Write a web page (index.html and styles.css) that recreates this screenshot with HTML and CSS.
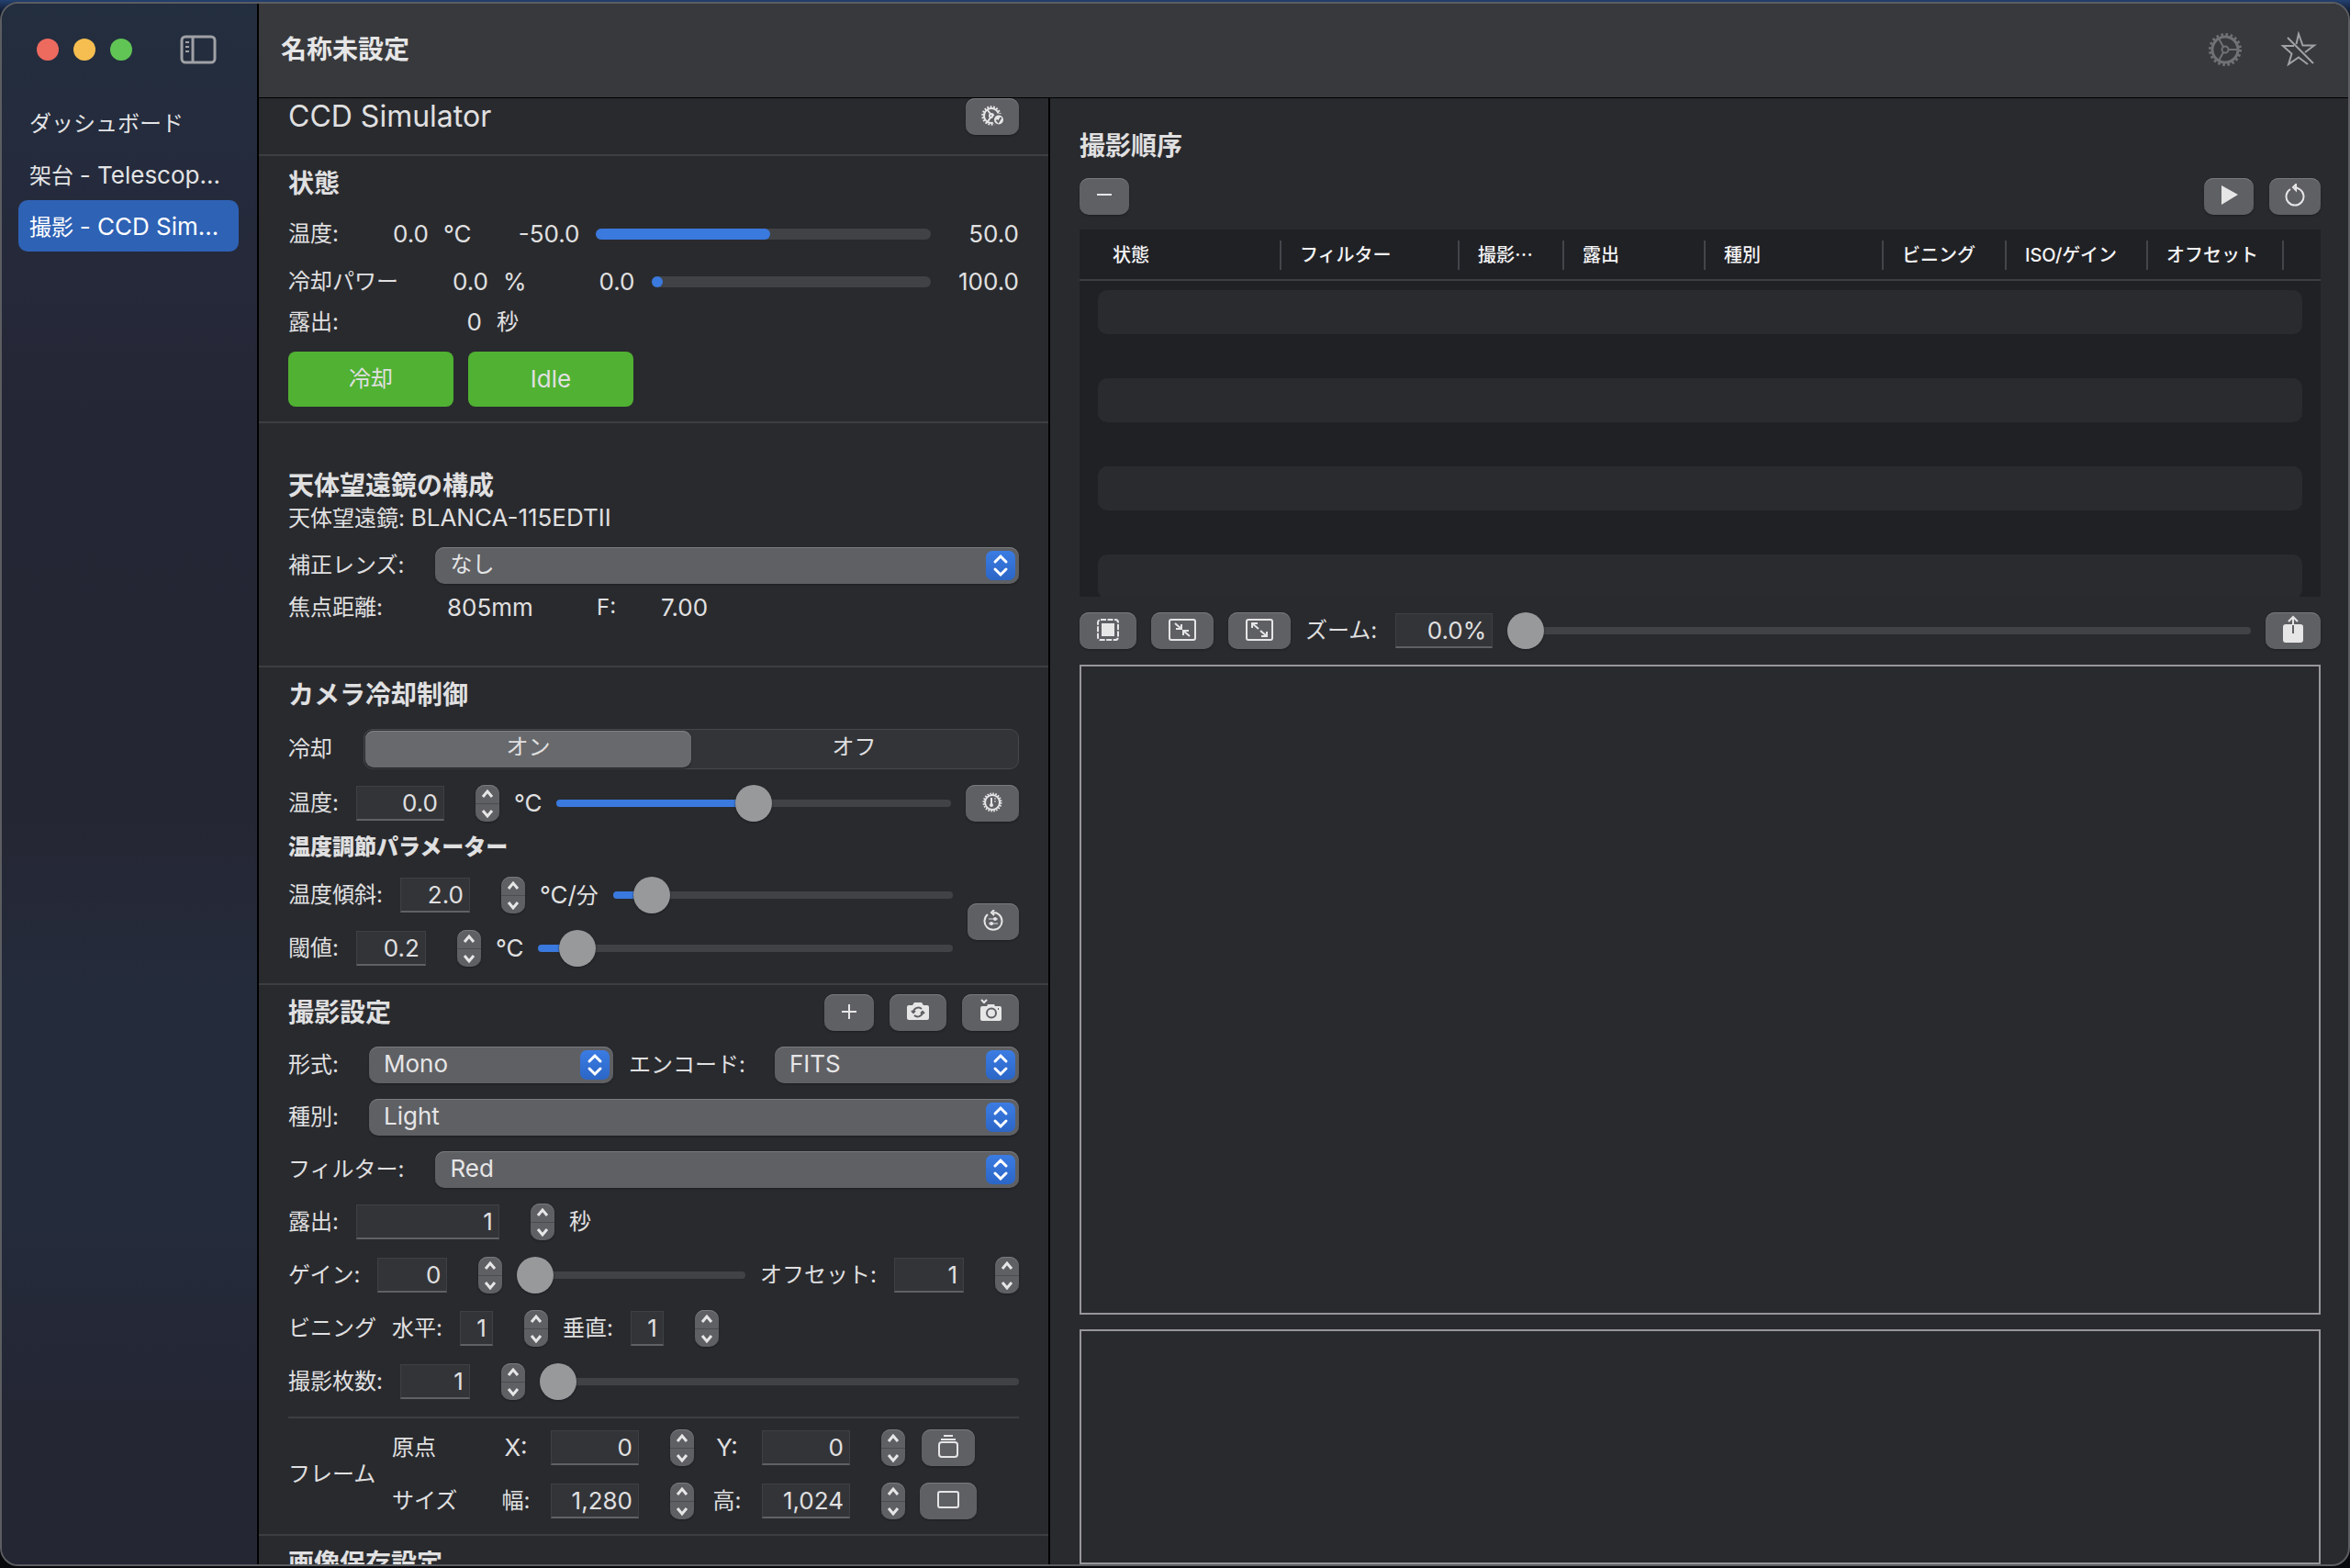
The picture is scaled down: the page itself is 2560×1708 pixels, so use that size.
FILE: index.html
```html
<!DOCTYPE html>
<html lang="ja">
<head>
    <meta charset="UTF-8">
    <meta name="viewport" content="width=device-width, initial-scale=1.0">
    <title>名称未設定</title>
    <link rel="stylesheet" href="styles.css">
</head>
<body>
    <!-- shared icons -->
    <svg class="sprite" aria-hidden="true">
        <symbol id="i-up" viewBox="0 0 26 20"><path d="M8 13l5-6 5 6"/></symbol>
        <symbol id="i-down" viewBox="0 0 26 20"><path d="M8 7l5 6 5-6"/></symbol>
        <symbol id="i-updown" viewBox="0 0 32 32"><rect width="32" height="32" rx="7" fill="url(#blue)" stroke="none"/><path d="M10 12l6-6 6 6M10 20l6 6 6-6"/></symbol>
        <linearGradient id="blue" x1="0" y1="0" x2="0" y2="1"><stop offset="0" stop-color="#3b7ce3"/><stop offset="1" stop-color="#2b66c6"/></linearGradient>
    </svg>

    <div class="window">
        <aside class="sidebar">
            <div class="window-buttons">
                <button class="light red" aria-label="閉じる"></button>
                <button class="light yellow" aria-label="しまう"></button>
                <button class="light green" aria-label="拡大"></button>
                <button class="plain" aria-label="サイドバー">
                    <svg width="40" height="32" viewBox="0 0 40 32"><rect x="2" y="2" width="36" height="28" rx="4"/><path d="M14 2v28"/><path d="M6 8h4M6 13h4M6 18h4" stroke-width="2"/></svg>
                </button>
            </div>
            <nav class="nav">
                <a href="#dashboard">ダッシュボード</a>
                <a href="#mount">架台 <span class="latin">- Telescop...</span></a>
                <a href="#camera" class="active">撮影 <span class="latin">- CCD Sim...</span></a>
            </nav>
        </aside>

        <div class="content">
            <header class="toolbar">
                <h1>名称未設定</h1>
                <button class="plain dim" aria-label="設定">
                    <svg width="40" height="40" viewBox="0 0 40 40"><circle cx="20" cy="20" r="16.500" stroke-width="3" stroke-dasharray="2.600 2.584"/><circle cx="20" cy="20" r="14" stroke-width="3"/><circle cx="20" cy="20" r="3.500"/><path d="M23.500 20H34M18 17l-5-9M18 23l-5 9"/></svg>
                </button>
                <button class="plain" aria-label="お気に入り解除">
                    <svg width="40" height="40" viewBox="0 0 40 40"><path d="M17.500 14L20 3l4.500 12.500H37L27 23M15 16H3l9.500 8.500L9 36l11-7.500L30 36M8 7l28 28"/></svg>
                </button>
            </header>

            <div class="panes">
                <main class="settings">
                    <div class="section device">
                        <h2>CCD Simulator</h2>
                        <button class="btn" aria-label="デバイス設定">
                            <svg width="28" height="24" viewBox="0 0 28 24"><circle cx="13" cy="12" r="9.500" stroke-width="2.500" stroke-dasharray="1.800 1.520"/><circle cx="13" cy="12" r="8"/><circle cx="13" cy="12" r="2"/><path d="M13 12h6M12 10L8 5M12 14l-4 6"/><circle cx="21" cy="16.500" r="6" fill="#e6e6e7" stroke="#5f6064"/><path d="M18.500 16.500l2 2.500 3-5" stroke="#5f6064"/></svg>
                        </button>
                    </div>

                    <div class="section status">
                        <h3>状態</h3>
                        <div class="line">
                            <span>温度:</span>
                            <span class="value short">0.0</span><span class="unit latin">°C</span>
                            <span class="value min">-50.0</span>
                            <div class="meter"><i style="width: 52%"></i></div>
                            <span class="value max">50.0</span>
                        </div>
                        <div class="line power">
                            <span>冷却パワー</span>
                            <span class="value short">0.0</span><span class="unit latin">%</span>
                            <span class="value min">0.0</span>
                            <div class="meter"><i style="width: 0%"></i></div>
                            <span class="value max">100.0</span>
                        </div>
                        <div class="line exposure">
                            <span>露出:</span>
                            <span class="value long">0</span><span class="unit">秒</span>
                        </div>
                        <div class="state-buttons">
                            <button class="state">冷却</button>
                            <button class="state latin">Idle</button>
                        </div>
                    </div>

                    <div class="section telescope">
                        <h3>天体望遠鏡の構成</h3>
                        <p>天体望遠鏡: <span class="latin">BLANCA-115EDTII</span></p>
                        <div class="row">
                            <label for="lens">補正レンズ:</label>
                            <div class="popup wide"><select id="lens"><option>なし</option></select><svg><use href="#i-updown"/></svg></div>
                        </div>
                        <div class="focal">
                            <span class="focal-label">焦点距離:</span>
                            <span class="focal-value latin">805mm</span>
                            <span class="f-label">F:</span>
                            <span class="latin">7.00</span>
                        </div>
                    </div>

                    <div class="section cooling">
                        <h3>カメラ冷却制御</h3>
                        <div class="row segment-row">
                            <span>冷却</span>
                            <div class="segment">
                                <label><input type="radio" name="cooler" checked><span>オン</span></label>
                                <label><input type="radio" name="cooler"><span>オフ</span></label>
                            </div>
                        </div>
                        <div class="row">
                            <label for="temp">温度:</label>
                            <input type="text" id="temp" class="field w96" value="0.0">
                            <div class="stepper"><button aria-label="増やす"><svg><use href="#i-up"/></svg></button><button aria-label="減らす"><svg><use href="#i-down"/></svg></button></div>
                            <span class="latin">°C</span>
                            <input type="range" class="slider" aria-label="温度" min="0" max="1000" value="500" style="--fill: 50%">
                            <button class="btn" aria-label="温度を設定">
                                <svg width="24" height="24" viewBox="0 0 24 24"><circle cx="12" cy="12" r="9.500" stroke-dasharray="1.600 1.384"/><circle cx="12" cy="12" r="8"/><path d="M11 7v7" /><path d="M14 8h2M14 11h2" stroke-width="1"/><circle cx="11" cy="15" r="1"/></svg>
                            </button>
                        </div>
                        <h4>温度調節パラメーター</h4>
                        <div class="params">
                            <div class="params-rows">
                                <div class="row">
                                    <label for="slope">温度傾斜:</label>
                                    <input type="text" id="slope" class="field w76" value="2.0">
                                    <div class="stepper"><button aria-label="増やす"><svg><use href="#i-up"/></svg></button><button aria-label="減らす"><svg><use href="#i-down"/></svg></button></div>
                                    <span><span class="latin">°C/</span>分</span>
                                    <input type="range" class="slider" aria-label="温度傾斜" min="0" max="1000" value="67" style="--fill: 10%">
                                </div>
                                <div class="row">
                                    <label for="threshold">閾値:</label>
                                    <input type="text" id="threshold" class="field w76" value="0.2">
                                    <div class="stepper"><button aria-label="増やす"><svg><use href="#i-up"/></svg></button><button aria-label="減らす"><svg><use href="#i-down"/></svg></button></div>
                                    <span class="latin">°C</span>
                                    <input type="range" class="slider" aria-label="閾値" min="0" max="1000" value="54" style="--fill: 8%">
                                </div>
                            </div>
                            <button class="btn" aria-label="パラメーターを戻す">
                                <svg width="24" height="24" viewBox="0 0 24 24"><path d="M6 5a9.500 9.500 0 1 0 12 0Q16 3 12 3M13 0l-3 3 3 3"/><path d="M7 10h10M7 15h10" stroke-width="1"/><circle cx="14" cy="10" r="1"/><circle cx="10" cy="15" r="1"/></svg>
                            </button>
                        </div>
                    </div>

                    <div class="section shooting">
                        <div class="section-head">
                            <h3>撮影設定</h3>
                            <button class="btn w54" aria-label="追加"><svg width="24" height="24" viewBox="0 0 24 24"><path d="M12 4v16M4 12h16"/></svg></button>
                            <button class="btn w62" aria-label="連続撮影"><svg width="28" height="24" viewBox="0 0 28 24"><path class="solid" d="M4 5h4l2-3h8l2 3h4a2 2 0 0 1 2 2v12a2 2 0 0 1-2 2H4a2 2 0 0 1-2-2V7a2 2 0 0 1 2-2z"/><path class="cut" d="M9 12a5.500 5.500 0 0 1 9-3M19 13a5.500 5.500 0 0 1-9 3M7 11l2 2 2-2M17 14l2-2 2 2"/></svg></button>
                            <button class="btn w62" aria-label="撮影"><svg width="28" height="28" viewBox="0 0 28 28"><path class="solid" d="M5 8h5l1-2h7l1 2h5a2 2 0 0 1 2 2v12a2 2 0 0 1-2 2H5a2 2 0 0 1-2-2V10a2 2 0 0 1 2-2z"/><circle class="cut" cx="15" cy="15.500" r="5"/><path class="cut" d="M22 11h1"/><path d="M4 1l3 3 3-3"/></svg></button>
                        </div>
                        <div class="row tight">
                            <label for="format" class="short-label">形式:</label>
                            <div class="popup"><select id="format" class="latin"><option>Mono</option></select><svg><use href="#i-updown"/></svg></div>
                            <label for="encode" class="encode">エンコード:</label>
                            <div class="popup"><select id="encode" class="latin"><option>FITS</option></select><svg><use href="#i-updown"/></svg></div>
                        </div>
                        <div class="row tight">
                            <label for="type" class="short-label">種別:</label>
                            <div class="popup"><select id="type" class="latin"><option>Light</option></select><svg><use href="#i-updown"/></svg></div>
                        </div>
                        <div class="row tight">
                            <label for="filter">フィルター:</label>
                            <div class="popup wide"><select id="filter" class="latin"><option>Red</option></select><svg><use href="#i-updown"/></svg></div>
                        </div>
                        <div class="row tight">
                            <label for="exposure">露出:</label>
                            <input type="text" id="exposure" class="field w156" value="1">
                            <div class="stepper"><button aria-label="増やす"><svg><use href="#i-up"/></svg></button><button aria-label="減らす"><svg><use href="#i-down"/></svg></button></div>
                            <span>秒</span>
                        </div>
                        <div class="row">
                            <label for="gain">ゲイン:</label>
                            <input type="text" id="gain" class="field w76" value="0">
                            <div class="stepper"><button aria-label="増やす"><svg><use href="#i-up"/></svg></button><button aria-label="減らす"><svg><use href="#i-down"/></svg></button></div>
                            <input type="range" class="slider" aria-label="ゲイン" min="0" max="1000" value="0" style="--fill: 0%">
                            <label for="offset">オフセット:</label>
                            <input type="text" id="offset" class="field w76" value="1">
                            <div class="stepper last"><button aria-label="増やす"><svg><use href="#i-up"/></svg></button><button aria-label="減らす"><svg><use href="#i-down"/></svg></button></div>
                        </div>
                        <div class="row">
                            <span class="group-label">ビニング</span>
                            <label for="bin-x">水平:</label>
                            <input type="text" id="bin-x" class="field w36" value="1">
                            <div class="stepper"><button aria-label="増やす"><svg><use href="#i-up"/></svg></button><button aria-label="減らす"><svg><use href="#i-down"/></svg></button></div>
                            <label for="bin-y">垂直:</label>
                            <input type="text" id="bin-y" class="field w36" value="1">
                            <div class="stepper"><button aria-label="増やす"><svg><use href="#i-up"/></svg></button><button aria-label="減らす"><svg><use href="#i-down"/></svg></button></div>
                        </div>
                        <div class="row">
                            <label for="count">撮影枚数:</label>
                            <input type="text" id="count" class="field w76" value="1">
                            <div class="stepper"><button aria-label="増やす"><svg><use href="#i-up"/></svg></button><button aria-label="減らす"><svg><use href="#i-down"/></svg></button></div>
                            <input type="range" class="slider last" aria-label="撮影枚数" min="0" max="1000" value="0" style="--fill: 0%">
                        </div>

                        <div class="frame">
                            <span class="group-label">フレーム</span>
                            <div class="frame-rows">
                                <div class="frame-row">
                                    <span class="frame-name">原点</span>
                                    <label for="x" class="axis latin">X:</label>
                                    <input type="text" id="x" class="field w96" value="0">
                                    <div class="stepper"><button aria-label="増やす"><svg><use href="#i-up"/></svg></button><button aria-label="減らす"><svg><use href="#i-down"/></svg></button></div>
                                    <label for="y" class="axis latin">Y:</label>
                                    <input type="text" id="y" class="field w96" value="0">
                                    <div class="stepper"><button aria-label="増やす"><svg><use href="#i-up"/></svg></button><button aria-label="減らす"><svg><use href="#i-down"/></svg></button></div>
                                    <div class="frame-action"><button class="btn" aria-label="原点を戻す"><svg width="24" height="28" viewBox="0 0 24 28"><rect x="2" y="9" width="20" height="16" rx="3"/><path d="M4 6h16M7 2h10"/></svg></button></div>
                                </div>
                                <div class="frame-row">
                                    <span class="frame-name">サイズ</span>
                                    <label for="w" class="axis">幅:</label>
                                    <input type="text" id="w" class="field w96" value="1,280">
                                    <div class="stepper"><button aria-label="増やす"><svg><use href="#i-up"/></svg></button><button aria-label="減らす"><svg><use href="#i-down"/></svg></button></div>
                                    <label for="h" class="axis">高:</label>
                                    <input type="text" id="h" class="field w96" value="1,024">
                                    <div class="stepper"><button aria-label="増やす"><svg><use href="#i-up"/></svg></button><button aria-label="減らす"><svg><use href="#i-down"/></svg></button></div>
                                    <div class="frame-action"><button class="btn w62" aria-label="全画面"><svg width="28" height="24" viewBox="0 0 28 24"><rect x="3" y="3" width="22" height="17" rx="2"/></svg></button></div>
                                </div>
                            </div>
                        </div>
                    </div>

                    <div class="section saving">
                        <h3>画像保存設定</h3>
                    </div>
                </main>

                <section class="sequence">
                    <h3>撮影順序</h3>
                    <div class="sequence-buttons">
                        <button class="btn w54" aria-label="削除"><svg width="24" height="24" viewBox="0 0 24 24"><path d="M4 11h16"/></svg></button>
                        <button class="btn w54 play" aria-label="開始"><svg width="24" height="24" viewBox="0 0 24 24"><path class="solid" d="M4 1l18 10L4 22z"/></svg></button>
                        <button class="btn w56" aria-label="やり直し"><svg width="24" height="26" viewBox="0 0 24 26"><path d="M7 6a9.500 9.500 0 1 0 10 0L13 4M13 1v6l-3-3z"/></svg></button>
                    </div>
                    <div class="table-box">
                        <table>
                            <colgroup>
                                <col class="c220"><col class="c194"><col class="c114"><col class="c154"><col class="c194"><col class="c134"><col class="c154"><col class="c148"><col>
                            </colgroup>
                            <thead>
                                <tr>
                                    <th><span>状態</span></th>
                                    <th><span>フィルター</span></th>
                                    <th><span>撮影⋯</span></th>
                                    <th><span>露出</span></th>
                                    <th><span>種別</span></th>
                                    <th><span>ビニング</span></th>
                                    <th><span>ISO/ゲイン</span></th>
                                    <th><span>オフセット</span></th>
                                    <th></th>
                                </tr>
                            </thead>
                            <tbody>
                                <tr><td colspan="9"><div class="stripe"></div></td></tr>
                                <tr><td colspan="9"><div class="stripe"></div></td></tr>
                                <tr><td colspan="9"><div class="stripe"></div></td></tr>
                                <tr><td colspan="9"><div class="stripe"></div></td></tr>
                            </tbody>
                        </table>
                    </div>
                    <div class="zoom-bar">
                        <button class="btn w62" aria-label="実寸"><svg width="28" height="28" viewBox="0 0 28 28"><rect x="3" y="3" width="22" height="22" rx="3" stroke-dasharray="6 1.500"/><rect class="solid" x="7" y="7" width="14" height="14"/></svg></button>
                        <button class="btn w68" aria-label="縮小"><svg width="32" height="28" viewBox="0 0 32 28"><rect x="2" y="3" width="28" height="22" rx="2"/><path d="M8 7l7 6M15 8v5H9M24 21l-7-6M17 20v-5h6"/></svg></button>
                        <button class="btn w68" aria-label="拡大"><svg width="32" height="28" viewBox="0 0 32 28"><rect x="2" y="3" width="28" height="22" rx="2"/><path d="M8 7l7 6M8 12V7h6M24 21l-7-6M24 16v5h-6"/></svg></button>
                        <label for="zoom">ズーム:</label>
                        <input type="text" id="zoom" class="field w106" value="0.0%">
                        <input type="range" class="slider" aria-label="ズーム" min="0" max="1000" value="0" style="--fill: 0%">
                        <button class="btn w60" aria-label="共有"><svg width="28" height="32" viewBox="0 0 28 32"><rect class="solid" x="3" y="10" width="22" height="20" rx="3"/><path class="cut" d="M14 10v10"/><path d="M14 11V2M9 7l5-5 5 5"/></svg></button>
                    </div>
                    <div class="preview"></div>
                    <div class="histogram"></div>
                </section>
            </div>
        </div>
    </div>
</body>
</html>
```
FILE: styles.css
```css
* {
    box-sizing: border-box;
}
body {
    margin: 0;
    padding: 2px 0;
    height: 100vh;
    overflow: hidden;
    background: linear-gradient(#23406f, #08090d 20px);
    color: #e0e0e1;
    font: 24px/32px Inter, "Noto Sans CJK JP", sans-serif;
}
h1, h2, h3, h4, p {
    margin: 0;
}
h1, h3 {
    font-size: 28px;
    line-height: 32px;
    font-weight: 600;
}
h4 {
    font-size: 24px;
    line-height: 32px;
    font-weight: 800;
}
button, input, select {
    font: inherit;
    color: inherit;
    margin: 0;
    padding: 0;
    border: 0;
}
svg {
    display: block;
    fill: none;
    stroke: currentColor;
    stroke-width: 2;
}
.latin,
.value,
.field {
    font-size: 26px;
}
.sprite {
    position: absolute;
    width: 0;
    height: 0;
}
.solid {
    fill: currentColor;
    stroke: none;
}
.cut {
    stroke: #5f6064;
}

/* window */
.window {
    display: flex;
    height: 100%;
    border: 2px solid #5b5d61;
    border-radius: 20px;
    overflow: hidden;
    background: #292a2e;
}
.sidebar {
    flex: 0 0 280px;
    border-right: 2px solid #000;
    background: linear-gradient(#232e3f, #252a3b 14%, #252635 26%, #252633 52%, #242b3b 63%, #242b3b 78%, #242634 90%);
}
.window-buttons {
    display: flex;
    align-items: center;
    gap: 16px;
    height: 102px;
    padding: 0 0 2px 38px;
}
.light {
    width: 24px;
    height: 24px;
    border-radius: 50%;
}
.red { background: #ed6a5f; }
.yellow { background: #f6be50; }
.green { background: #61c555; }
.plain {
    background: none;
    color: #a0a1a5;
}
.window-buttons .plain svg {
    stroke-width: 3;
}
.window-buttons .plain {
    margin-left: 36px;
}
.nav {
    padding: 0 20px 0 18px;
}
.nav a {
    display: block;
    height: 56px;
    padding: 0 12px;
    border-radius: 10px;
    line-height: 58px;
    white-space: nowrap;
    color: #e3e4e6;
    text-decoration: none;
}
.nav a.active {
    background: #2e62b5;
    color: #fff;
}
.content {
    flex: 1;
    min-width: 0;
    display: flex;
    flex-direction: column;
}
.toolbar {
    display: flex;
    align-items: center;
    gap: 40px;
    height: 103px;
    padding: 0 34px 2px 24px;
    border-bottom: 1px solid #000;
    background: #38393c;
}
.toolbar h1 {
    flex: 1;
    color: #e6e6e7;
}
.toolbar .dim {
    color: #707174;
}
.panes {
    flex: 1;
    min-height: 0;
    display: flex;
}

/* settings pane */
.settings {
    flex: 0 1 862px;
    overflow: hidden;
    border-right: 2px solid #000;
}
.section {
    padding: 0 32px;
    border-bottom: 2px solid #3d3e42;
}
.device {
    display: flex;
    justify-content: space-between;
    padding-bottom: 21px;
}
.device h2 {
    font-size: 32px;
    line-height: 40px;
    font-weight: 400;
}
.btn {
    display: flex;
    align-items: center;
    justify-content: center;
    flex: none;
    width: 58px;
    height: 40px;
    padding-bottom: 2px;
    border-radius: 10px;
    background: #5f6064;
    color: #e6e6e7;
    box-shadow: inset 0 1px #7a7b7f, 0 1px 2px #1c1d20;
}
.w54 { width: 54px; }
.w56 { width: 56px; }
.w60 { width: 60px; }
.w62 { width: 62px; }
.w68 { width: 68px; }

.status {
    padding-top: 14px;
    padding-bottom: 16px;
}
.line {
    display: flex;
    align-items: center;
    margin-top: 23px;
}
.line.power {
    margin-top: 20px;
}
.line.exposure {
    margin-top: 12px;
}
.value {
    text-align: right;
}
.value.short {
    width: 98px;
}
.value.long {
    width: 156px;
}
.unit {
    padding-left: 16px;
}
.value.min {
    width: 118px;
}
.value.max {
    width: 96px;
}
.meter {
    flex: 1;
    height: 12px;
    margin-left: 18px;
    border-radius: 6px;
    background: #414246;
}
.meter i {
    display: block;
    min-width: 12px;
    height: 12px;
    border-radius: 6px;
    background: #3a79dd;
}
.state-buttons {
    display: flex;
    gap: 16px;
    margin-top: 16px;
}
.state {
    width: 180px;
    height: 60px;
    border-radius: 8px;
    background: #50b132;
}

.telescope {
    padding-top: 52px;
    padding-bottom: 47px;
}
.telescope p {
    margin-top: 3px;
}
.telescope .row {
    margin-top: 15px;
}
.focal {
    display: flex;
    margin-top: 10px;
}
.focal-label {
    width: 173px;
}
.focal-value {
    width: 163px;
}
.f-label {
    width: 70px;
}

.row {
    display: flex;
    align-items: center;
    height: 40px;
    margin-top: 18px;
}
.row.tight {
    margin-top: 17px;
}
.popup {
    position: relative;
    flex: 1;
}
.row label {
    white-space: nowrap;
}
.popup select {
    display: block;
    width: 100%;
    height: 40px;
    padding: 0 48px 3px 16px;
    border-radius: 10px;
    appearance: none;
    background: #5f6064;
    color: #e6e6e7;
    box-shadow: inset 0 1px #7a7b7f, 0 1px 2px #1c1d20;
}
.popup svg {
    position: absolute;
    top: 4px;
    right: 4px;
    width: 32px;
    height: 32px;
    color: #fff;
    stroke-width: 3;
    stroke-linecap: round;
    pointer-events: none;
}
.row .short-label {
    width: 88px;
}
.row .encode {
    width: 176px;
    padding-left: 17px;
}
.popup.wide {
    margin-left: 34px;
}

.field {
    height: 38px;
    margin-left: 19px;
    padding: 0 6px 0 0;
    border: 1px solid #3f4044;
    border-bottom: 2px solid #606165;
    border-radius: 0;
    background: #333438;
    text-align: right;
}
.w36 { width: 36px; }
.w76 { width: 76px; }
.w96 { width: 96px; }
.w106 { width: 106px; }
.w156 { width: 156px; }
.stepper {
    flex: none;
    width: 26px;
    height: 40px;
    margin: 0 16px 0 34px;
    border-radius: 10px;
    overflow: hidden;
    background: #5f6064;
    box-shadow: inset 0 1px #7a7b7f, 0 1px 2px #1c1d20;
}
.stepper.last {
    margin-right: 0;
}
.stepper button {
    display: block;
    width: 26px;
    height: 20px;
    background: none;
}
.stepper button + button {
    border-top: 1px solid #4b4c50;
}
.stepper svg {
    width: 26px;
    height: 20px;
    color: #e6e6e7;
    stroke-width: 3;
}
.slider {
    flex: 1;
    min-width: 0;
    height: 40px;
    margin: 0 16px;
    appearance: none;
    background: none;
}
.stepper + .slider {
    margin-left: 0;
}
.slider.last {
    margin-right: 0;
}
.slider::-webkit-slider-runnable-track {
    height: 8px;
    border-radius: 4px;
    background: linear-gradient(to right, #3a79dd var(--fill), #414246 var(--fill));
}
.slider::-webkit-slider-thumb {
    appearance: none;
    width: 40px;
    height: 40px;
    margin-top: -16px;
    border-radius: 50%;
    background: #98999b;
    box-shadow: 0 1px 2px #1c1d20;
}

.cooling {
    padding-top: 14px;
    padding-bottom: 18px;
}
.cooling .segment-row {
    height: 44px;
    margin: 21px 0 17px;
}
.cooling .segment-row + .row {
    margin-top: 0;
}
.segment {
    flex: 1;
    display: flex;
    height: 44px;
    margin-left: 34px;
    padding: 1px;
    border: 1px solid #47484c;
    border-radius: 10px;
    background: #333438;
}
.segment label {
    flex: 1;
}
.segment input {
    position: absolute;
    opacity: 0;
}
.segment span {
    display: block;
    height: 40px;
    border-radius: 9px;
    line-height: 36px;
    text-align: center;
}
.segment input:checked + span {
    background: #68696c;
    box-shadow: inset 0 1px #818286, 0 1px 2px #1c1d20;
}
.cooling h4 {
    margin: 12px 0 16px;
}
.params {
    display: flex;
    align-items: center;
}
.params-rows {
    flex: 1;
}
.params-rows .row:first-child {
    margin-top: 0;
}
.params .btn {
    width: 56px;
}

.shooting {
    padding-top: 10px;
    padding-bottom: 16px;
}
.section-head {
    display: flex;
    align-items: center;
    gap: 17px;
}
.section-head h3 {
    flex: 1;
}
.group-label {
    flex: none;
    width: 113px;
}
.frame {
    display: flex;
    align-items: center;
    margin-top: 18px;
    padding-top: 12px;
    border-top: 2px solid #3d3e42;
}
.frame-rows {
    display: flex;
    flex-direction: column;
    gap: 18px;
}
.frame-row {
    display: flex;
    align-items: center;
    height: 40px;
}
.frame-name {
    width: 107px;
}
.axis {
    width: 56px;
    text-align: center;
}
.frame-row .field {
    margin-left: 10px;
}
.frame-row .stepper {
    margin-right: 8px;
}
.frame-action {
    display: flex;
    justify-content: center;
    width: 78px;
}
.saving {
    padding-top: 14px;
}

/* sequence pane */
.sequence {
    flex: 1;
    min-width: 0;
    display: flex;
    flex-direction: column;
    padding: 36px 30px 0 32px;
}
.sequence-buttons {
    display: flex;
    gap: 17px;
    margin-top: 19px;
}
.play {
    margin-left: auto;
}
.table-box {
    flex: none;
    height: 400px;
    margin-top: 16px;
    overflow: hidden;
    background: #202125;
}
table {
    width: 100%;
    table-layout: fixed;
    border-spacing: 0;
}
th {
    height: 56px;
    padding: 2px 0 0;
    border-bottom: 2px solid #3d3e42;
    font-size: 20px;
    font-weight: 500;
    text-align: left;
    color: #f4f4f5;
}
th span {
    display: block;
    padding-left: 20px;
    border-right: 2px solid #44454a;
    white-space: nowrap;
}
th:first-child span {
    padding-left: 36px;
}
td {
    height: 96px;
    padding: 10px 20px 38px;
}
.stripe {
    height: 48px;
    border-radius: 10px;
    background: #2a2b2f;
}
.c114 { width: 114px; }
.c134 { width: 134px; }
.c148 { width: 148px; }
.c154 { width: 154px; }
.c194 { width: 194px; }
.c220 { width: 220px; }
.zoom-bar {
    display: flex;
    align-items: center;
    gap: 16px;
    margin: 17px 0;
}
.zoom-bar label {
    margin-right: 4px;
}
.zoom-bar .field,
.zoom-bar .slider {
    margin: 0;
}
.preview {
    flex: 28;
    border: 2px solid #97979b;
}
.histogram {
    flex: 10;
    margin-top: 16px;
    border: 2px solid #97979b;
}
```
